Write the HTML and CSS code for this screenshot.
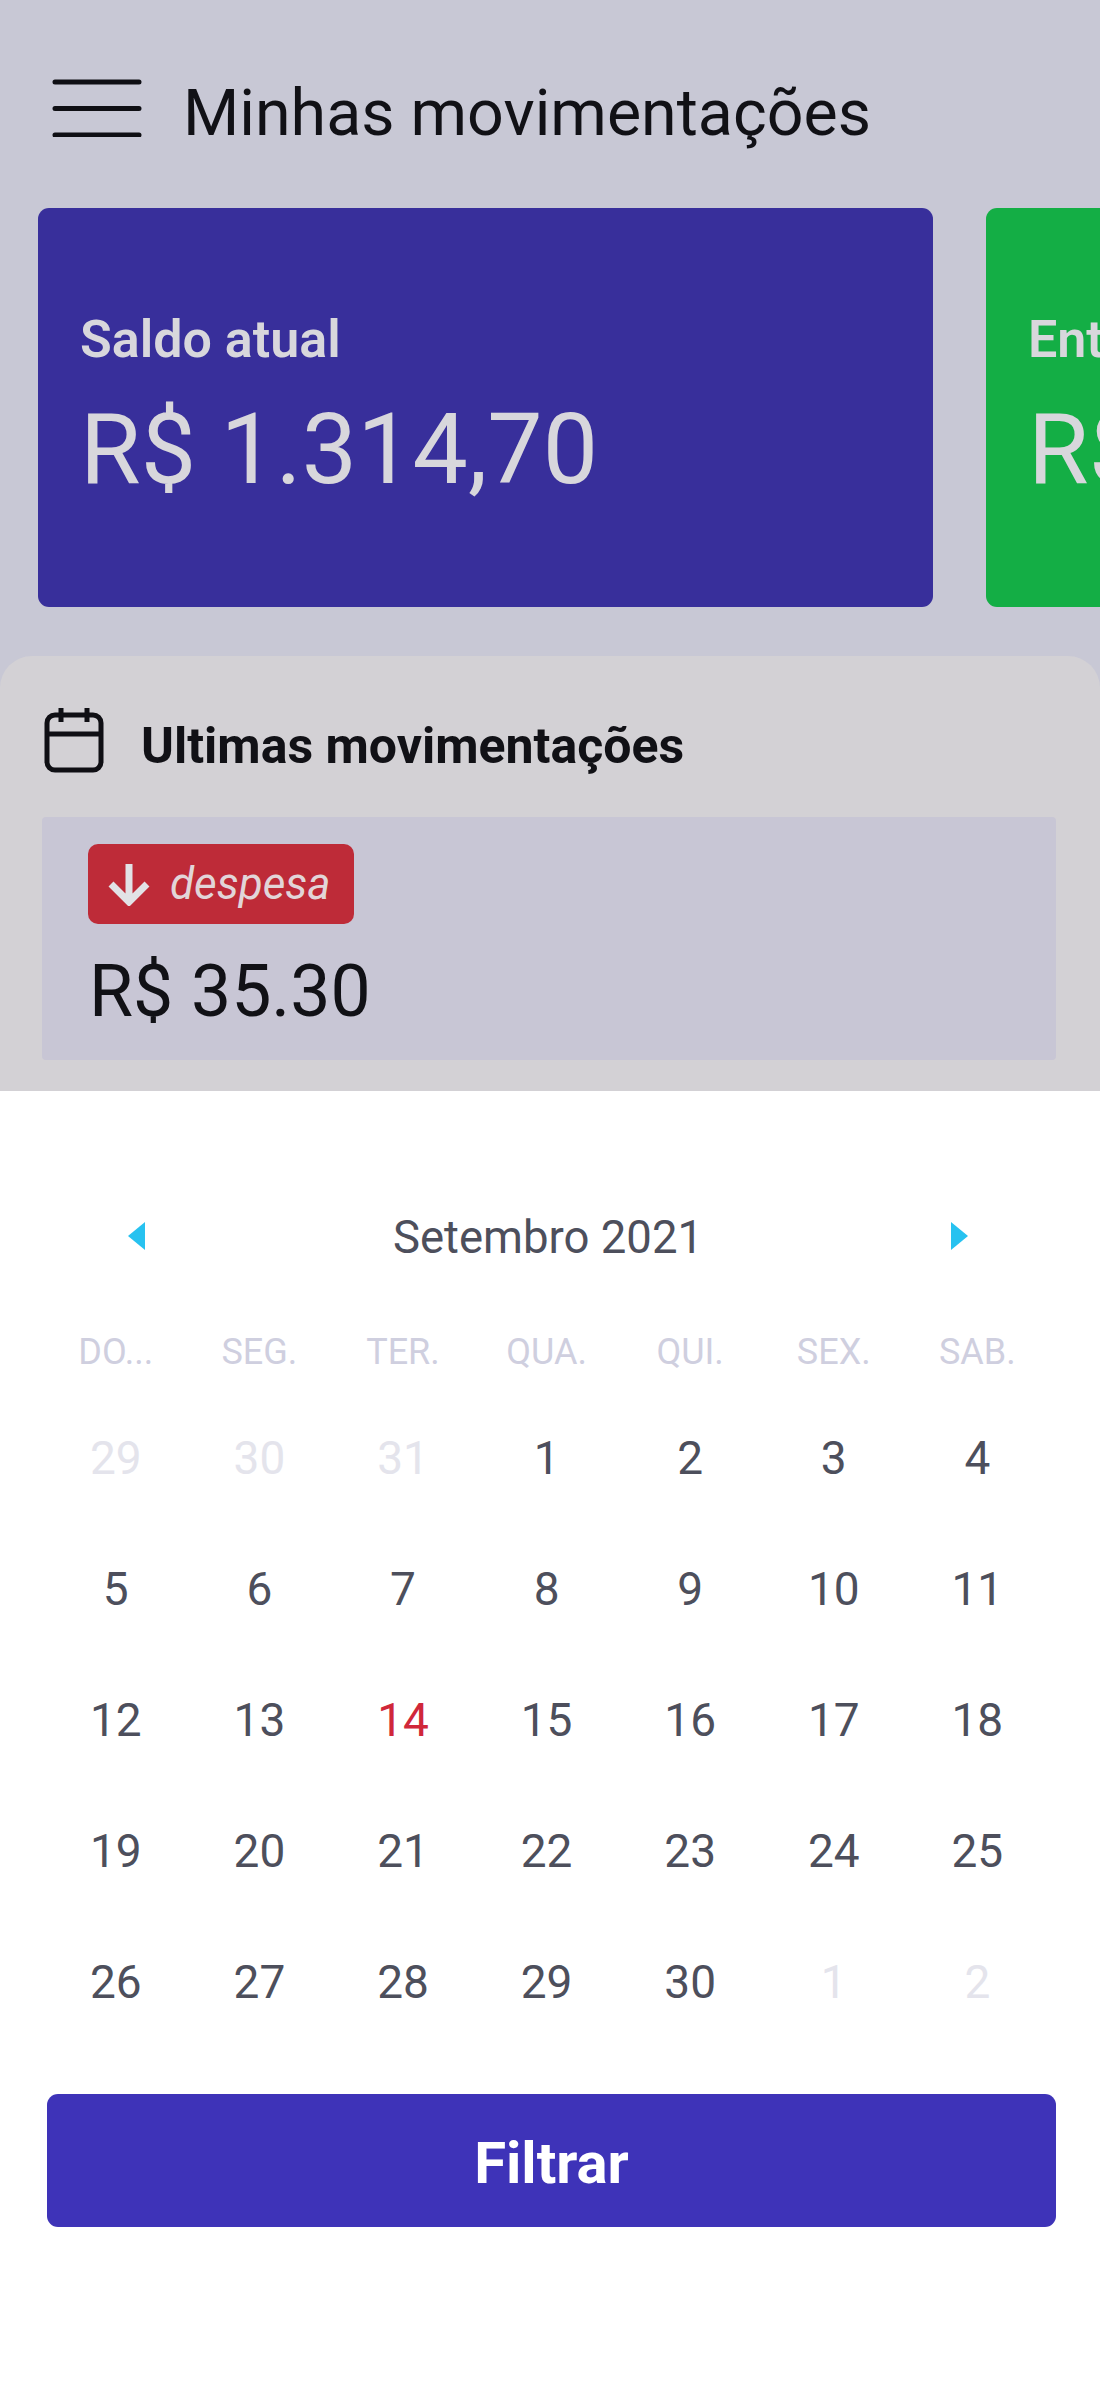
FILE: index.html
```html
<!DOCTYPE html>
<html lang="pt-BR">
<head>
<meta charset="utf-8">
<title>Minhas movimentações</title>
<link rel="stylesheet" href="styles.css">
</head>
<body>
<div class="backdrop">
  <header class="topbar">
    <svg class="menu-icon" viewBox="0 0 90 58" aria-hidden="true"><path d="M3 3H87M3 29.500H87M3 56H87"/></svg>
    <h1 class="page-title">Minhas movimentações</h1>
  </header>
  <section class="cards">
    <div class="card card-blue">
      <div class="card-label">Saldo atual</div>
      <div class="card-value">R$ 1.314,70</div>
    </div>
    <div class="card card-green">
      <div class="card-label">Entradas</div>
      <div class="card-value">R$ 0,00</div>
    </div>
  </section>
  <section class="panel">
    <div class="panel-head">
      <svg class="cal-icon" viewBox="0 0 60 66" aria-hidden="true"><rect x="3" y="8" width="54" height="55" rx="8"/><path d="M3 27H57M17 1V15M43 1V15"/></svg>
      <h2 class="panel-title">Ultimas movimentações</h2>
    </div>
    <div class="item">
      <div class="badge">
        <svg class="badge-icon" viewBox="0 0 44 44" aria-hidden="true"><path d="M22 2V39M4 22L22 40L40 22"/></svg>
        <span class="badge-text">despesa</span>
      </div>
      <div class="item-value">R$ 35.30</div>
    </div>
  </section>
</div>
<section class="sheet">
  <div class="cal-head">
    <svg class="cal-arrow" viewBox="0 0 17 28" aria-hidden="true"><path d="M17 0V28L0 14Z"/></svg>
    <div class="cal-month">Setembro 2021</div>
    <svg class="cal-arrow" viewBox="0 0 17 28" aria-hidden="true"><path d="M0 0V28L17 14Z"/></svg>
  </div>
  <div class="weekdays">
    <span>DO...</span><span>SEG.</span><span>TER.</span><span>QUA.</span><span>QUI.</span><span>SEX.</span><span>SAB.</span>
  </div>
  <div class="days">
    <span class="off">29</span><span class="off">30</span><span class="off">31</span><span>1</span><span>2</span><span>3</span><span>4</span>
    <span>5</span><span>6</span><span>7</span><span>8</span><span>9</span><span>10</span><span>11</span>
    <span>12</span><span>13</span><span class="today">14</span><span>15</span><span>16</span><span>17</span><span>18</span>
    <span>19</span><span>20</span><span>21</span><span>22</span><span>23</span><span>24</span><span>25</span>
    <span>26</span><span>27</span><span>28</span><span>29</span><span>30</span><span class="off">1</span><span class="off">2</span>
  </div>
  <button class="filter-btn" type="button">Filtrar</button>
</section>
</body>
</html>
```
FILE: styles.css
```css
* { box-sizing: border-box; }
html, body { margin: 0; padding: 0; }
body {
  width: 1100px;
  height: 2382px;
  overflow: hidden;
  background: #fff;
  font-family: Roboto, "Liberation Sans", sans-serif;
}
.backdrop {
  height: 1091px;
  padding-top: 50px;
  overflow: hidden;
  background: #c8c8d5;
}
.topbar {
  display: flex;
  align-items: center;
  gap: 41px;
  height: 116px;
  padding-left: 52px;
}
.menu-icon {
  width: 90px;
  height: 58px;
  flex: none;
  fill: none;
  stroke: #0f0f14;
  stroke-width: 5;
  stroke-linecap: round;
}
.page-title {
  margin: 0;
  padding-top: 9px;
  font-size: 64.500px;
  font-weight: 400;
  line-height: 72px;
  color: #111116;
}
.cards {
  display: flex;
  gap: 53px;
  margin-top: 42px;
  padding-left: 38px;
}
.card {
  flex: none;
  width: 895px;
  height: 399px;
  padding: 98px 42px 0;
  border-radius: 11px;
  color: #d8d7dc;
}
.card-blue { background: #382f9b; }
.card-green { background: #14ae45; }
.card-label {
  font-size: 52px;
  font-weight: 600;
  line-height: 68px;
}
.card-value {
  margin-top: 20px;
  font-size: 98.500px;
  font-weight: 400;
  line-height: 112px;
}
.panel {
  height: 440px;
  margin-top: 49px;
  padding: 49px 44px 0 42px;
  border-radius: 32px 32px 0 0;
  background: #d3d1d5;
}
.panel-head {
  display: flex;
  align-items: center;
  gap: 37px;
  height: 70px;
  padding-left: 2px;
}
.cal-icon {
  width: 60px;
  height: 66px;
  flex: none;
  fill: none;
  stroke: #0f0f14;
  stroke-width: 5;
  stroke-linejoin: round;
}
.panel-title {
  margin: 0;
  padding-top: 12px;
  font-size: 50px;
  font-weight: 700;
  line-height: 60px;
  color: #111116;
}
.item {
  height: 243px;
  margin-top: 42px;
  padding: 27px 46px 0;
  border-radius: 4px;
  background: #c8c6d5;
}
.badge {
  display: inline-flex;
  align-items: center;
  gap: 19px;
  width: 266px;
  height: 80px;
  padding-left: 19px;
  border-radius: 10px;
  background: #be2b38;
  vertical-align: top;
}
.badge-icon {
  width: 44px;
  height: 44px;
  flex: none;
  fill: none;
  stroke: #e2e2e6;
  stroke-width: 7;
}
.badge-text {
  font-size: 44px;
  font-style: italic;
  font-weight: 400;
  color: #e2d5d8;
}
.item-value {
  margin-top: 27px;
  margin-left: 1px;
  font-size: 71.500px;
  font-weight: 400;
  line-height: 82px;
  color: #111116;
}
.sheet {
  display: flex;
  flex-direction: column;
  height: 1291px;
  background: #fff;
}
.cal-head {
  display: flex;
  align-items: center;
  justify-content: space-between;
  height: 60px;
  margin-top: 116px;
  padding: 0 132px 0 128px;
}
.cal-arrow {
  width: 17px;
  height: 28px;
  flex: none;
  margin-top: -3px;
  fill: #27c2f0;
}
.cal-month {
  padding-top: 2px;
  font-size: 45.500px;
  line-height: 60px;
  color: #4d4f5c;
}
.weekdays {
  display: grid;
  grid-template-columns: repeat(7, 143.6px);
  margin-top: 63px;
  padding-left: 44px;
  font-size: 36px;
  line-height: 44px;
  color: #cfcfdf;
  text-align: center;
}
.days {
  display: grid;
  grid-template-columns: repeat(7, 143.6px);
  grid-auto-rows: 131px;
  align-items: center;
  margin-top: 18px;
  padding-left: 44px;
  font-size: 46px;
  color: #4d4f5c;
  text-align: center;
}
.days .off { color: #e4e4ec; }
.days .today { color: #d0273a; }
.filter-btn {
  width: 1009px;
  height: 133px;
  margin: 47px 0 0 47px;
  padding: 4px 0 0;
  border: 0;
  border-radius: 11px;
  background: #3e33b8;
  color: #fff;
  font-family: Roboto, "Liberation Sans", sans-serif;
  font-size: 58px;
  font-weight: 700;
}
```
